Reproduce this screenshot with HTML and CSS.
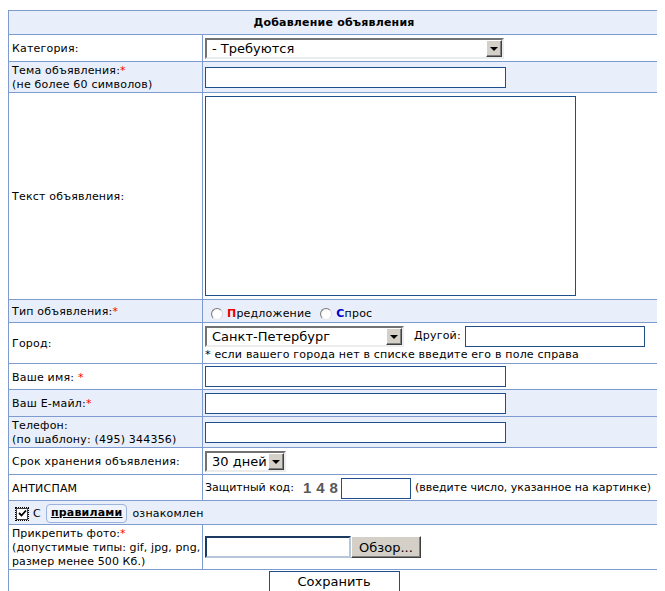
FILE: index.html
```html
<!DOCTYPE html>
<html lang="ru">
<head>
<meta charset="utf-8">
<title>Добавление объявления</title>
<link rel="stylesheet" href="styles.css">
</head>
<body>
<form class="ad-form">
<table class="form">
  <colgroup><col class="c1"><col class="c2"></colgroup>
  <tr class="alt h-head"><th colspan="2">Добавление объявления</th></tr>
  <tr class="h-cat">
    <td class="lbl">Категория:</td>
    <td class="fld"><div class="select sel-cat"><span class="sel-text">- Требуются</span><span class="sel-btn"></span></div></td>
  </tr>
  <tr class="alt h-tema">
    <td class="lbl">Тема объявления:<span class="req">*</span><br>(не более 60 символов)</td>
    <td class="fld"><input class="inp inp-w" type="text"></td>
  </tr>
  <tr class="h-text">
    <td class="lbl">Текст объявления:</td>
    <td class="fld"><textarea class="ta"></textarea></td>
  </tr>
  <tr class="alt h-tip">
    <td class="lbl">Тип объявления:<span class="req">*</span></td>
    <td class="fld"><div class="radios"><span class="radio"></span><span><b class="red">П</b>редложение</span><span class="radio r2"></span><span><b class="blue">С</b>прос</span></div></td>
  </tr>
  <tr class="h-city">
    <td class="lbl">Город:</td>
    <td class="fld">
      <div class="city-line"><div class="select sel-city"><span class="sel-text">Санкт-Петербург</span><span class="sel-btn"></span></div><span class="other">Другой:</span><input class="inp inp-other" type="text"></div>
      <div class="note">* если вашего города нет в списке введите его в поле справа</div>
    </td>
  </tr>
  <tr class="h-name">
    <td class="lbl">Ваше имя: <span class="req">*</span></td>
    <td class="fld"><input class="inp inp-w" type="text"></td>
  </tr>
  <tr class="alt h-email">
    <td class="lbl">Ваш E-майл:<span class="req">*</span></td>
    <td class="fld"><input class="inp inp-w" type="text"></td>
  </tr>
  <tr class="alt h-phone">
    <td class="lbl">Телефон:<br>(по шаблону: (495) 344356)</td>
    <td class="fld"><input class="inp inp-w" type="text"></td>
  </tr>
  <tr class="h-srok">
    <td class="lbl">Срок хранения объявления:</td>
    <td class="fld"><div class="select sel-srok"><span class="sel-text">30 дней</span><span class="sel-btn"></span></div></td>
  </tr>
  <tr class="h-anti">
    <td class="lbl">АНТИСПАМ</td>
    <td class="fld"><div class="anti"><span>Защитный код:</span><span class="code"><span>1</span><span>4</span><span>8</span></span><input class="inp inp-code" type="text"><span>(введите число, указанное на картинке)</span></div></td>
  </tr>
  <tr class="alt h-chk">
    <td colspan="2" class="lbl"><div class="agree"><span class="chk"><svg width="9" height="9" viewBox="0 0 9 9"><path d="M1 4 L3.5 6.5 L8 1.5" fill="none" stroke="#000" stroke-width="1.8"/></svg></span><span>С</span><a class="rules" href="#">правилами</a><span>ознакомлен</span></div></td>
  </tr>
  <tr class="h-photo">
    <td class="lbl nowrap">Прикрепить фото:<span class="req">*</span><br>(допустимые типы: gif, jpg, png,<br>размер менее 500 Кб.)</td>
    <td class="fld"><div class="file"><span class="file-inp"></span><span class="browse">Обзор...</span></div></td>
  </tr>
  <tr class="h-save">
    <td colspan="2" class="save-cell"><button class="save" type="button">Сохранить</button></td>
  </tr>
</table>
</form>
</body>
</html>
```

FILE: styles.css
```css
html, body {
  background: #fff;
}
body {
  margin: 10px 8px 0;
  font: 11px/14px "DejaVu Sans", Verdana, sans-serif;
  letter-spacing: 0.2px;
  color: #000;
}
.ad-form {
  margin: 0;
}
.form {
  width: 652px;
  border-collapse: collapse;
  table-layout: fixed;
  border: 1px solid #7e9bcf;
}
.c1 { width: 194px; }
.form td,
.form th {
  border: 1px solid #7e9bcf;
  padding: 0 2px;
  vertical-align: middle;
  background: #fff;
}
.form .alt td,
.form .alt th {
  background: #e8effa;
}
.form th {
  font-weight: bold;
  text-align: center;
  padding-top: 1px;
}
.form td.lbl {
  padding-left: 3px;
  padding-top: 2px;
}
.form td.nowrap {
  white-space: nowrap;
  letter-spacing: 0.1px;
}
.req { color: #f00; }

.h-head { height: 24px; }
.h-cat { height: 27px; }
.h-tema { height: 31px; }
.h-text { height: 207px; }
.h-tip { height: 23px; }
.h-city { height: 41px; }
.h-name { height: 26px; }
.h-email { height: 27px; }
.h-phone { height: 30px; }
.h-srok { height: 27px; }
.h-anti { height: 26px; }
.h-chk { height: 24px; }
.h-photo { height: 43px; }
.h-save { height: 24px; }

.select {
  display: flex;
  align-items: center;
  box-sizing: border-box;
  height: 21px;
  border-style: solid;
  border-width: 2px;
  border-color: #727272 #ececec #ececec #727272;
  background: #fff;
  font: 13px/15px "DejaVu Sans", Tahoma, sans-serif;
  letter-spacing: 0;
}
.sel-cat { width: 299px; }
.sel-city { width: 199px; }
.sel-srok { width: 81px; }
.sel-text {
  flex: 1;
  padding-left: 5px;
  white-space: nowrap;
  overflow: hidden;
}
.sel-btn {
  position: relative;
  box-sizing: border-box;
  width: 16px;
  height: 17px;
  background: #d4d0c8;
  border: 1px solid;
  border-color: #fff #404040 #404040 #fff;
  box-shadow: inset -1px -1px 0 #808080;
}
.sel-btn::after {
  content: "";
  position: absolute;
  left: 3px;
  top: 6px;
  border-left: 4px solid transparent;
  border-right: 4px solid transparent;
  border-top: 4px solid #000;
}

.inp {
  box-sizing: border-box;
  height: 21px;
  margin: 0;
  padding: 0 3px;
  border: 1px solid #1e4f8b;
  background: #fff;
  display: block;
}
.inp-w { width: 301px; }
.inp-other { width: 180px; }
.inp-code { width: 70px; height: 21px; margin: 0 4px 0 3px; }

.ta {
  display: block;
  box-sizing: border-box;
  width: 371px;
  height: 200px;
  margin: 0;
  border: 1px solid #1e4f8b;
  resize: none;
  background: #fff;
}

.radios {
  display: flex;
  align-items: center;
  padding-top: 6px;
}
.radio {
  box-sizing: border-box;
  width: 12px;
  height: 12px;
  border-radius: 50%;
  border: 1px solid;
  border-color: #7a7a7a #d8d8d8 #e8e8e8 #7a7a7a;
  background: radial-gradient(circle at 60% 60%, #fff 50%, #e4e4e4 100%);
  margin: 0 4px 0 6px;
}
.radio.r2 { margin-left: 9px; }
.red { color: #e00; }
.blue { color: #0000c8; }

.city-line {
  display: flex;
  align-items: center;
  margin-top: 1px;
}
.other {
  margin: 0 4px 0 10px;
}
.note {
  margin-top: 1px;
  line-height: 14px;
}

.anti {
  display: flex;
  align-items: center;
  white-space: nowrap;
  padding-top: 1px;
  letter-spacing: 0;
}
.code {
  display: flex;
  gap: 5px;
  font: bold 15px/16px "Liberation Sans", Arial, sans-serif;
  color: #585858;
  margin-left: 9px;
}

.agree {
  display: flex;
  align-items: center;
  padding-left: 3px;
}
.chk {
  display: flex;
  align-items: center;
  justify-content: center;
  box-sizing: border-box;
  width: 12px;
  height: 12px;
  border: 1px solid #404040;
  background: #fff;
  outline: 1px dotted #000;
  outline-offset: 0;
  margin: 0 5px 0 1px;
}
.rules {
  margin: 0 5px 0 5px;
  padding: 1px 4px 2px;
  border: 1px solid #9bb3dd;
  border-radius: 4px;
  background: #eef3fc;
  color: #000;
  font-weight: bold;
  text-decoration: underline;
}

.file {
  display: flex;
  align-items: center;
}
.file-inp {
  box-sizing: border-box;
  width: 146px;
  height: 22px;
  border-style: solid;
  border-width: 2px;
  border-color: #1a3a62 #b7c7da #b7c7da #1a3a62;
  background: #fff;
}
.browse {
  box-sizing: border-box;
  width: 70px;
  height: 22px;
  display: flex;
  align-items: center;
  justify-content: center;
  background: #d4d0c8;
  border: 1px solid;
  border-color: #fff #404040 #404040 #fff;
  box-shadow: inset -1px -1px 0 #808080;
  font: 13px/15px "DejaVu Sans", Tahoma, sans-serif;
  letter-spacing: 0;
}

.form td.save-cell {
  text-align: center;
  vertical-align: top;
  padding-top: 1px;
}
.save {
  box-sizing: border-box;
  width: 131px;
  height: 21px;
  border: 1px solid #1e4f8b;
  background: #fff;
  font: 13px/15px "DejaVu Sans", Tahoma, sans-serif;
  letter-spacing: 0;
  color: #000;
  padding: 0;
}
```
